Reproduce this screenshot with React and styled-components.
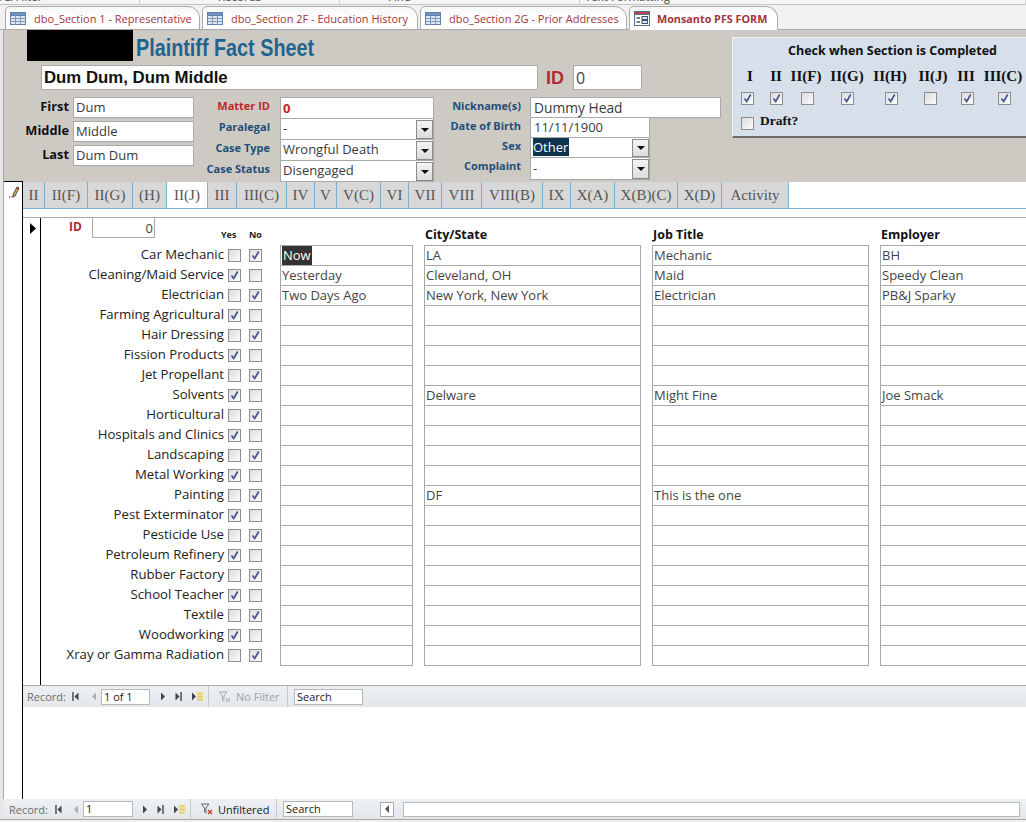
import styled, { createGlobalStyle } from 'styled-components'

const GlobalStyle = createGlobalStyle`
  html, body {
    margin: 0;
    padding: 0;
    background: #fff;
  }
  * {
    box-sizing: border-box;
  }
`

const UI_FONT = `"Open Sans", "Liberation Sans", sans-serif`
const SERIF_FONT = `"Liberation Serif", serif`
const BLUE = '#1f4e79'

const Page = styled.div`
  width: 1026px;
  height: 822px;
  overflow: hidden;
  display: flex;
  flex-direction: column;
  background: #f0f0f0;
  font-family: ${UI_FONT};
  font-size: 13px;
  color: #333;
`

// what is left of the ribbon above the tabs, mostly cut off
const RibbonEdge = styled.div`
  height: 5px;
  flex: none;
  overflow: hidden;
  display: grid;
  grid-template-columns: 140px 200px 240px 1fr;
  background: #f4f5f6;
  border-bottom: 1px solid #c4c4c4;
`

const RibbonGroup = styled.div`
  margin-top: -11px;
  text-indent: ${(p) => p.$indent}px;
  border-right: 1px solid #d0d0d0;
  font-size: 11.5px;
  line-height: 15px;
  color: #444;
  white-space: nowrap;
`

const DocTabs = styled.div`
  height: 25px;
  flex: none;
  display: flex;
  align-items: flex-end;
  gap: 2px;
  padding-left: 5px;
  background: #f1f1f1;
  border-bottom: 1px solid #a9a9a9;
`

const DocTab = styled.div`
  width: ${(p) => p.$width}px;
  height: 24px;
  margin-bottom: -1px;
  display: flex;
  align-items: center;
  gap: ${(p) => (p.$active ? 7 : 8)}px;
  padding-left: 4px;
  background: linear-gradient(#f7f7f7, #fff 50%);
  border: 1px solid #a9a9a9;
  border-bottom: 1px solid ${(p) => (p.$active ? '#fff' : '#a9a9a9')};
  border-radius: 5px 12px 0 0;
  font-size: ${(p) => (p.$active ? 10.8 : 11)}px;
  font-weight: ${(p) => (p.$active ? 700 : 400)};
  color: #a2353c;
  white-space: nowrap;
`

const FormHeader = styled.div`
  height: 151px;
  flex: none;
  display: flex;
  background: #cdcac4;
  border-left: 3px solid #e6e6e6;
  box-shadow: inset 1px 0 0 #a9a9a9;
`

const HeaderMain = styled.div`
  width: 729px;
  flex: none;
  display: flex;
  flex-direction: column;
`

const TitleRow = styled.div`
  height: 35px;
  display: flex;
  padding-left: 24px;
`

const BlackedOut = styled.div`
  width: 106px;
  height: 31px;
  background: #000;
`

const Title = styled.h1`
  margin: 0 0 0 3px;
  font-family: "Liberation Sans", sans-serif;
  font-size: 23px;
  line-height: 37px;
  font-weight: 700;
  color: #1f6391;
  transform: scaleX(0.86);
  transform-origin: left center;
  white-space: nowrap;
`

const NameRow = styled.div`
  height: 32px;
  display: flex;
  align-items: flex-start;
  padding-left: 38px;
`

const NameBox = styled.div`
  width: 497px;
  height: 25px;
  padding-left: 2px;
  background: #fff;
  border: 1px solid #a9a9a9;
  font-family: "Liberation Sans", sans-serif;
  font-size: 16.8px;
  font-weight: 700;
  line-height: 24px;
  color: #111;
`

const BigId = styled.span`
  margin: 0 9px 0 8px;
  font-family: "Liberation Sans", sans-serif;
  font-size: 18px;
  font-weight: 700;
  line-height: 26px;
  color: #b02a30;
`

const IdBox = styled.div`
  width: 69px;
  height: 25px;
  padding-left: 2px;
  background: #fff;
  border: 1px solid #a9a9a9;
  font-size: 16px;
  line-height: 25px;
  color: #444;
`

const FieldsRow = styled.div`
  display: flex;
`

const FieldColumn = styled.div`
  display: grid;
  grid-template-columns: ${(p) => p.$label}px ${(p) => p.$box}px;
  grid-auto-rows: ${(p) => p.$row}px;
  column-gap: ${(p) => p.$gap}px;
  row-gap: ${(p) => p.$rowGap || 0}px;
  margin-right: ${(p) => p.$right || 0}px;
  align-items: start;
`

const NameLabel = styled.label`
  text-align: right;
  font-size: 12.8px;
  font-weight: 700;
  line-height: 19px;
  color: #111;
`

const FieldLabel = styled.label`
  text-align: right;
  font-size: 11px;
  font-weight: 700;
  line-height: 17px;
  color: ${(p) => p.$color || BLUE};
  white-space: nowrap;
`

const TextBox = styled.div`
  position: relative;
  width: ${(p) => (p.$width ? `${p.$width}px` : 'auto')};
  height: ${(p) => p.$height || 22}px;
  padding-left: ${(p) => p.$pad || 2}px;
  background: #fff;
  border: 1px solid #a9a9a9;
  font-size: ${(p) => p.$size || 13}px;
  font-weight: ${(p) => (p.$bold ? 700 : 400)};
  line-height: ${(p) => (p.$height || 22) - 3 + (p.$drop || 0)}px;
  color: ${(p) => p.$color || '#3a3a3a'};
  white-space: nowrap;
`

const Highlight = styled.span`
  display: inline-block;
  padding-right: 1px;
  background: ${(p) => p.$bg};
  color: #fff;
`

const DropButton = styled.span`
  position: absolute;
  top: 1px;
  right: 0;
  bottom: 0;
  width: 17px;
  display: flex;
  align-items: center;
  justify-content: center;
  background: linear-gradient(#f4f4f4, #dcdcdc);
  border: 1px solid #8c8c8c;

  &::after {
    content: '';
    border-left: 4px solid transparent;
    border-right: 4px solid transparent;
    border-top: 4px solid #111;
  }
`

const SectionPanel = styled.div`
  width: 294px;
  height: 101px;
  margin: 7px 0 0 0;
  padding-top: 4px;
  background: #d6dfea;
  border-top: 1px solid #eef2f7;
  border-left: 1px solid #eef2f7;
  border-bottom: 2px solid #6d6d6d;
`

const PanelTitle = styled.div`
  height: 22px;
  padding-left: 55px;
  font-size: 12.5px;
  font-weight: 700;
  line-height: 17px;
  color: #111;
`

const SectionNames = styled.div`
  height: 24px;
  display: grid;
  grid-template-columns: 34px 18px 42px 40px 46px 40px 26px 48px;
  justify-items: center;
  align-items: center;
`

const SectionChecks = styled.div`
  height: 21px;
  display: grid;
  grid-template-columns: 28px 30px 32px 49px 38px 41px 33px 41px;
  justify-items: center;
  align-items: center;
`

const SectionName = styled.div`
  font-family: ${SERIF_FONT};
  font-size: 15px;
  font-weight: 700;
  color: #111;
  white-space: nowrap;
`

const DraftRow = styled.div`
  display: flex;
  align-items: center;
  gap: 6px;
  height: 20px;
  margin-top: 4px;
  padding-left: 8px;
`

const DraftLabel = styled.span`
  margin-top: -4px;
  font-family: ${SERIF_FONT};
  font-size: 13.5px;
  font-weight: 700;
  color: #111;
`

const CheckBox = styled.span`
  width: 13px;
  height: 13px;
  flex: none;
  display: inline-flex;
  align-items: center;
  justify-content: center;
  border: 1px solid #8e8e8e;
  background: linear-gradient(135deg, #dcdcdc, #fbfbfb);
`

const Body = styled.div`
  flex: 1;
  min-height: 0;
  display: flex;
  background: #fff;
`

const Gutter = styled.div`
  width: 4px;
  flex: none;
  background: #e6e6e6;
  border-right: 1px solid #a9a9a9;
`

const Selector = styled.div`
  width: 19px;
  flex: none;
  padding: 2px 0 0 4px;
  border-right: 1px solid #000;
  border-top: 1px solid #000;
`

const Pane = styled.div`
  flex: 1;
  min-width: 0;
  display: flex;
  flex-direction: column;
`

const PageTabs = styled.div`
  height: 28px;
  flex: none;
  display: flex;
  background: linear-gradient(#cdcac4 1px, #fff 1px);
  border-bottom: 1px solid #7fb0d3;
`

const PageTab = styled.div`
  width: ${(p) => p.$width}px;
  height: 26px;
  margin-top: 1px;
  margin-bottom: ${(p) => (p.$active ? -1 : 0)}px;
  text-align: center;
  background: ${(p) => (p.$active ? '#fff' : '#d8d8d8')};
  border-right: 1px solid #7fb0d3;
  font-family: ${SERIF_FONT};
  font-size: 15px;
  line-height: 26px;
  color: #555;
`

const SubformWrap = styled.div`
  height: 469px;
  flex: none;
  display: flex;
  margin-top: 8px;
  border-top: 1px solid #a9a9a9;
  border-bottom: 1px solid #a9a9a9;
  overflow: hidden;
`

const SubSelector = styled.div`
  width: 18px;
  flex: none;
  padding: 2px 0 0 7px;
  border-right: 1px solid #000;
`

const SubContent = styled.div`
  flex: 1;
  min-width: 0;
  overflow: hidden;
`

const columns = '187px 21px 31px 144px 228px 228px 160px'

const HeadRow = styled.div`
  height: 27px;
  display: grid;
  grid-template-columns: ${columns};
`

const IdCell = styled.div`
  display: flex;
  align-items: flex-start;
  padding-left: 28px;
`

const SmallId = styled.span`
  width: 23px;
  font-size: 12px;
  font-weight: 700;
  line-height: 18px;
  color: #b02a30;
`

const SmallIdBox = styled.div`
  width: 63px;
  height: 21px;
  margin-top: -1px;
  padding-right: 1px;
  text-align: right;
  border: 1px solid #a9a9a9;
  font-size: 13px;
  line-height: 20px;
  color: #444;
`

const YesNo = styled.div`
  align-self: end;
  padding-bottom: 3px;
  font-size: 9px;
  font-weight: 700;
  line-height: 14px;
  color: #222;
  margin-left: ${(p) => p.$left}px;
`

const ColHead = styled.div`
  align-self: end;
  padding-left: 1px;
  font-size: 12.5px;
  font-weight: 700;
  line-height: 20px;
  color: #111;
`

const JobRow = styled.div`
  height: 20px;
  display: grid;
  grid-template-columns: ${columns};
`

const JobName = styled.div`
  padding-right: 4px;
  text-align: right;
  font-size: 13.2px;
  line-height: 19px;
  color: #222;
  white-space: nowrap;
`

const CheckCell = styled.div`
  display: flex;
  padding-top: 4px;
`

const JobInput = styled.div`
  height: 21px;
  margin-right: ${(p) => (p.$last ? 0 : 11)}px;
  padding-left: 1px;
  border: 1px solid #a9a9a9;
  font-size: 13px;
  line-height: 19px;
  color: #444;
  white-space: nowrap;
`

const NowText = styled.span`
  display: inline-block;
  padding: 0 1px;
  background: #333;
  color: #fff;
`

const NavBar = styled.div`
  height: ${(p) => p.$height}px;
  flex: none;
  display: flex;
  align-items: center;
  background: linear-gradient(#eef1f4, #e3e6ea);
  font-size: 11px;
  color: #6d6d6d;
`

const FooterBar = styled(NavBar)`
  border-left: 4px solid #e6e6e6;
`

const NavLabel = styled.span`
  width: ${(p) => p.$width}px;
  padding-left: ${(p) => p.$left}px;
`

const NavIcons = styled.div`
  display: flex;
  align-items: center;
  width: ${(p) => p.$width}px;
  flex: none;
  padding-left: ${(p) => p.$left || 0}px;
  gap: ${(p) => p.$gap || 0}px;
`

const NavInput = styled.div`
  width: ${(p) => p.$width}px;
  height: 16px;
  flex: none;
  padding-left: 2px;
  background: #fff;
  border: 1px solid #b5b8bc;
  font-size: 11px;
  line-height: 14px;
  color: #222;
`

const FilterBlock = styled.div`
  width: ${(p) => p.$width}px;
  height: 100%;
  flex: none;
  display: flex;
  align-items: center;
  gap: 4px;
  margin-right: 6px;
  padding-left: 10px;
  border-left: 1px solid #c4c7cb;
  border-right: 1px solid #c4c7cb;
  color: ${(p) => p.$color};
`

const ScrollArea = styled.div`
  flex: 1;
  height: 100%;
  display: flex;
  align-items: center;
  margin-left: 27px;
`

const ScrollButton = styled.span`
  width: 14px;
  height: 15px;
  flex: none;
  display: flex;
  align-items: center;
  justify-content: center;
  background: #fff;
  border: 1px solid #a9a9a9;

  &::after {
    content: '';
    border-top: 4px solid transparent;
    border-bottom: 4px solid transparent;
    border-right: 4px solid #555;
  }
`

const ScrollTrack = styled.span`
  width: 617px;
  height: 15px;
  margin-left: 9px;
  background: #fff;
  border: 1px solid #b5b8bc;
`

const Spacer = styled.div`
  flex: 1;
`

const BottomEdge = styled.div`
  height: 3px;
  flex: none;
  background: #f0f0f0;
  border-top: 1px solid #a9a9a9;
`

const Check = ({ on }) => (
  <CheckBox>
    {on && (
      <svg width='11' height='11' viewBox='0 0 11 11'>
        <path d='M2.5 5.5 L4.7 8.5 L8.7 1.5' fill='none' stroke='#46558f' strokeWidth='1.7' />
      </svg>
    )}
  </CheckBox>
)

const TableIcon = () => (
  <svg width='16' height='13' viewBox='0 0 16 13'>
    <rect x='0.5' y='0.5' width='15' height='12' fill='#dce6f2' stroke='#5d7fa8' />
    <rect x='0.5' y='0.5' width='15' height='3' fill='#6f93bf' stroke='#5d7fa8' />
    <path d='M5.5 3.5V12.5M10.5 3.5V12.5M0.5 6.5H15.5M0.5 9.5H15.5' stroke='#7f9cc0' />
  </svg>
)

const FormIcon = () => (
  <svg width='16' height='15' viewBox='0 0 16 15'>
    <rect x='0.5' y='0.5' width='15' height='14' fill='#fff' stroke='#5a6f8c' />
    <rect x='0.5' y='0.5' width='15' height='3' fill='#b9454b' stroke='#5a6f8c' />
    <path d='M2.5 7H6M2.5 11H6' stroke='#44546a' strokeWidth='1.4' />
    <rect x='8' y='5.5' width='5.5' height='3' fill='#dce6f2' stroke='#44546a' />
    <rect x='8' y='9.5' width='5.5' height='3' fill='#dce6f2' stroke='#44546a' />
  </svg>
)

const PencilIcon = () => (
  <svg width='12' height='13' viewBox='0 0 12 13'>
    <path d='M1 12h1M3.5 12h1' stroke='#000' />
    <path d='M5 10 L9 2 L11 3 L7 11 L5 12 Z' fill='#e8b04a' stroke='#222' strokeWidth='0.8' />
    <path d='M8.6 2.8 L10.6 3.8' stroke='#a33' strokeWidth='1.4' />
  </svg>
)

const RecordArrow = () => (
  <svg width='6' height='11' viewBox='0 0 6 11'>
    <path d='M0 0 L6 5.5 L0 11 Z' fill='#000' />
  </svg>
)

const NavGlyph = ({ type }) => {
  const dark = '#444'
  if (type === 'first')
    return (
      <svg width='7' height='9' viewBox='0 0 7 9'>
        <path d='M1 0V9' stroke={dark} strokeWidth='1.4' />
        <path d='M6.5 0.5V8.5L2.5 4.5Z' fill={dark} />
      </svg>
    )
  if (type === 'prev')
    return (
      <svg width='6' height='9' viewBox='0 0 6 9'>
        <path d='M5 0.5V8.5L1 4.5Z' fill='#b0b0b0' />
      </svg>
    )
  if (type === 'next')
    return (
      <svg width='6' height='9' viewBox='0 0 6 9'>
        <path d='M1 0.5V8.5L5 4.5Z' fill={dark} />
      </svg>
    )
  if (type === 'last')
    return (
      <svg width='7' height='9' viewBox='0 0 7 9'>
        <path d='M6 0V9' stroke={dark} strokeWidth='1.4' />
        <path d='M0.5 0.5V8.5L4.5 4.5Z' fill={dark} />
      </svg>
    )
  return (
    <svg width='13' height='9' viewBox='0 0 13 9'>
      <path d='M1 0.5V8.5L5 4.5Z' fill={dark} />
      <path d='M6 1h6M6 4.5h6M6 8h6M7 0v9M9 0v9M11 0v9' stroke='#eecb4f' />
    </svg>
  )
}

const FilterIcon = ({ faded }) => (
  <svg width='13' height='12' viewBox='0 0 13 12'>
    <path d='M0.5 1H8L5 5V10L3.5 9V5Z' fill='none' stroke={faded ? '#aaa' : '#666'} />
    <path d='M7 7L11 11M11 7L7 11' stroke={faded ? '#bbb' : '#c0392b'} strokeWidth='1.2' />
  </svg>
)

const tabs = [
  ['II', 22],
  ['II(F)', 43],
  ['II(G)', 45],
  ['(H)', 34],
  ['II(J)', 41],
  ['III', 29],
  ['III(C)', 50],
  ['IV', 28],
  ['V', 22],
  ['V(C)', 44],
  ['VI', 28],
  ['VII', 33],
  ['VIII', 40],
  ['VIII(B)', 61],
  ['IX', 28],
  ['X(A)', 44],
  ['X(B)(C)', 63],
  ['X(D)', 44],
  ['Activity', 67],
]

const sections = [
  ['I', true],
  ['II', true],
  ['II(F)', false],
  ['II(G)', true],
  ['II(H)', true],
  ['II(J)', false],
  ['III', true],
  ['III(C)', true],
]

const jobs = [
  ['Car Mechanic', 'Now', 'LA', 'Mechanic', 'BH'],
  ['Cleaning/Maid Service', 'Yesterday', 'Cleveland, OH', 'Maid', 'Speedy Clean'],
  ['Electrician', 'Two Days Ago', 'New York, New York', 'Electrician', 'PB&J Sparky'],
  ['Farming Agricultural'],
  ['Hair Dressing'],
  ['Fission Products'],
  ['Jet Propellant'],
  ['Solvents', '', 'Delware', 'Might Fine', 'Joe Smack'],
  ['Horticultural'],
  ['Hospitals and Clinics'],
  ['Landscaping'],
  ['Metal Working'],
  ['Painting', '', 'DF', 'This is the one', ''],
  ['Pest Exterminator'],
  ['Pesticide Use'],
  ['Petroleum Refinery'],
  ['Rubber Factory'],
  ['School Teacher'],
  ['Textile'],
  ['Woodworking'],
  ['Xray or Gamma Radiation'],
]

const App = () => {
  return (
    <Page>
      <GlobalStyle />

      <RibbonEdge>
        <RibbonGroup $indent={-21}>Sort &amp; Filter</RibbonGroup>
        <RibbonGroup $indent={78}>Records</RibbonGroup>
        <RibbonGroup $indent={48}>Find</RibbonGroup>
        <RibbonGroup $indent={5}>Text Formatting</RibbonGroup>
      </RibbonEdge>

      <DocTabs>
        <DocTab $width={195}><TableIcon />dbo_Section 1 - Representative</DocTab>
        <DocTab $width={216}><TableIcon />dbo_Section 2F - Education History</DocTab>
        <DocTab $width={207}><TableIcon />dbo_Section 2G - Prior Addresses</DocTab>
        <DocTab $width={149} $active><FormIcon />Monsanto PFS FORM</DocTab>
      </DocTabs>

      <FormHeader>
        <HeaderMain>
          <TitleRow>
            <BlackedOut />
            <Title>Plaintiff Fact Sheet</Title>
          </TitleRow>

          <NameRow>
            <NameBox>Dum Dum, Dum Middle</NameBox>
            <BigId>ID</BigId>
            <IdBox>0</IdBox>
          </NameRow>

          <FieldsRow>
            <FieldColumn $label={66} $box={121} $row={21} $rowGap={3} $gap={4} $right={12}>
              <NameLabel>First</NameLabel>
              <TextBox $height={21}>Dum</TextBox>
              <NameLabel>Middle</NameLabel>
              <TextBox $height={21}>Middle</TextBox>
              <NameLabel>Last</NameLabel>
              <TextBox $height={21}>Dum Dum</TextBox>
            </FieldColumn>

            <FieldColumn $label={64} $box={154} $row={21} $gap={10} $right={9}>
              <FieldLabel $color='#c0272d'>Matter ID</FieldLabel>
              <TextBox $color='#c0272d' $bold $drop={1}>0</TextBox>
              <FieldLabel>Paralegal</FieldLabel>
              <TextBox>-<DropButton /></TextBox>
              <FieldLabel>Case Type</FieldLabel>
              <TextBox>Wrongful Death<DropButton /></TextBox>
              <FieldLabel>Case Status</FieldLabel>
              <TextBox>Disengaged<DropButton /></TextBox>
            </FieldColumn>

            <FieldColumn $label={78} $box={191} $row={20} $gap={9}>
              <FieldLabel>Nickname(s)</FieldLabel>
              <TextBox $pad={3} $height={21} $size={13.8} $drop={2}>Dummy Head</TextBox>
              <FieldLabel>Date of Birth</FieldLabel>
              <TextBox $pad={3} $height={21} $width={120} $drop={1}>11/11/1900</TextBox>
              <FieldLabel>Sex</FieldLabel>
              <TextBox $pad={0} $height={21} $width={120}>
                <Highlight $bg='#0f3450'>Other</Highlight>
                <DropButton />
              </TextBox>
              <FieldLabel>Complaint</FieldLabel>
              <TextBox $height={23} $width={120}>-<DropButton /></TextBox>
            </FieldColumn>
          </FieldsRow>
        </HeaderMain>

        <SectionPanel>
          <PanelTitle>Check when Section is Completed</PanelTitle>
          <SectionNames>
            {sections.map(([name]) => (
              <SectionName key={name}>{name}</SectionName>
            ))}
          </SectionNames>
          <SectionChecks>
            {sections.map(([name, on]) => (
              <Check key={name} on={on} />
            ))}
          </SectionChecks>
          <DraftRow>
            <Check />
            <DraftLabel>Draft?</DraftLabel>
          </DraftRow>
        </SectionPanel>
      </FormHeader>

      <Body>
        <Gutter />
        <Selector>
          <PencilIcon />
        </Selector>

        <Pane>
          <PageTabs>
            {tabs.map(([name, width]) => (
              <PageTab key={name} $width={width} $active={name === 'II(J)'}>
                {name}
              </PageTab>
            ))}
          </PageTabs>

          <SubformWrap>
            <SubSelector>
              <RecordArrow />
            </SubSelector>

            <SubContent>
              <HeadRow>
                <IdCell>
                  <SmallId>ID</SmallId>
                  <SmallIdBox>0</SmallIdBox>
                </IdCell>
                <YesNo $left={-7}>Yes</YesNo>
                <YesNo $left={0}>No</YesNo>
                <ColHead />
                <ColHead>City/State</ColHead>
                <ColHead>Job Title</ColHead>
                <ColHead>Employer</ColHead>
              </HeadRow>

              {jobs.map(([name, when, city, title, employer], i) => (
                <JobRow key={name}>
                  <JobName>{name}</JobName>
                  <CheckCell><Check on={i % 2 === 1} /></CheckCell>
                  <CheckCell><Check on={i % 2 === 0} /></CheckCell>
                  <JobInput>{when === 'Now' ? <NowText>Now</NowText> : when}</JobInput>
                  <JobInput>{city}</JobInput>
                  <JobInput>{title}</JobInput>
                  <JobInput $last>{employer}</JobInput>
                </JobRow>
              ))}
            </SubContent>
          </SubformWrap>

          <NavBar $height={21}>
            <NavLabel $width={49} $left={4}>Record:</NavLabel>
            <NavIcons $width={29} $gap={12}>
              <NavGlyph type='first' />
              <NavGlyph type='prev' />
            </NavIcons>
            <NavInput $width={49}>1 of 1</NavInput>
            <NavIcons $width={58} $left={10} $gap={9}>
              <NavGlyph type='next' />
              <NavGlyph type='last' />
              <NavGlyph type='new' />
            </NavIcons>
            <FilterBlock $width={80} $color='#a3a3a3'>
              <FilterIcon faded />
              No Filter
            </FilterBlock>
            <NavInput $width={69}>Search</NavInput>
            <Spacer />
          </NavBar>
        </Pane>
      </Body>

      <FooterBar $height={20}>
        <NavLabel $width={51} $left={5}>Record:</NavLabel>
        <NavIcons $width={28} $gap={11}>
          <NavGlyph type='first' />
          <NavGlyph type='prev' />
        </NavIcons>
        <NavInput $width={50}>1</NavInput>
        <NavIcons $width={57} $left={9} $gap={9}>
          <NavGlyph type='next' />
          <NavGlyph type='last' />
          <NavGlyph type='new' />
        </NavIcons>
        <FilterBlock $width={87} $color='#222'>
          <FilterIcon />
          Unfiltered
        </FilterBlock>
        <NavInput $width={70}>Search</NavInput>
        <ScrollArea>
          <ScrollButton />
          <ScrollTrack />
        </ScrollArea>
      </FooterBar>
      <BottomEdge />
    </Page>
  )
}

export default App
